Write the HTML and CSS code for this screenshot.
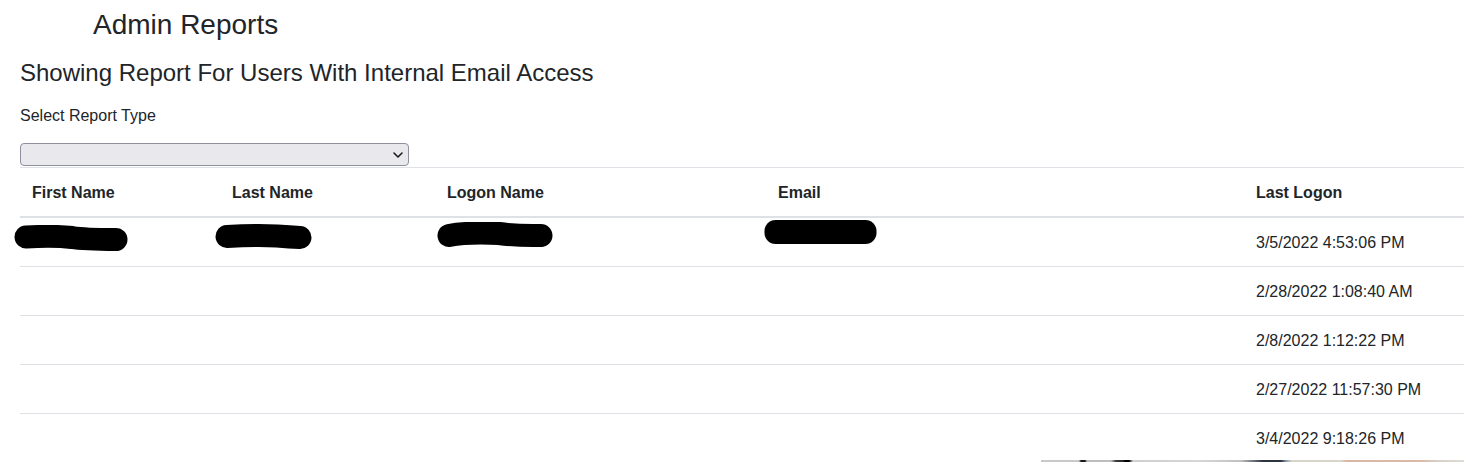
FILE: index.html
```html
<!DOCTYPE html>
<html lang="en">
<head>
<meta charset="utf-8">
<title>Admin Reports</title>
<link rel="stylesheet" href="styles.css">
</head>
<body>
<div class="page">
  <h1 class="title">Admin Reports</h1>
  <h2 class="subtitle">Showing Report For Users With Internal Email Access</h2>
  <label class="label" for="rtype">Select Report Type</label>
  <div class="select-wrap">
    <select id="rtype" class="select"><option></option></select>
    <svg class="chev" width="10" height="6" viewBox="0 0 10 6"><path d="M1 1 L5 5 L9 1" fill="none" stroke="#1b1b1b" stroke-width="1.6" stroke-linecap="round" stroke-linejoin="round"/></svg>
  </div>
  <table class="report">
    <colgroup>
      <col class="c1"><col class="c2"><col class="c3"><col class="c4"><col class="c5">
    </colgroup>
    <thead>
      <tr><th>First Name</th><th>Last Name</th><th>Logon Name</th><th>Email</th><th>Last Logon</th></tr>
    </thead>
    <tbody>
      <tr>
        <td><svg class="blob b1" width="114" height="27" viewBox="0 0 114 27"><path d="M12 12 Q 40 10.5 58 12.5 Q 70 14.5 102 14.5" fill="none" stroke="#000" stroke-width="23" stroke-linecap="round" stroke-linejoin="round"/></svg></td>
        <td><svg class="blob b2" width="97" height="26" viewBox="0 0 97 26"><path d="M12 12.5 Q 40 11 62 12 Q 75 13 85 13.5" fill="none" stroke="#000" stroke-width="23" stroke-linecap="round" stroke-linejoin="round"/></svg></td>
        <td><svg class="blob b3" width="116" height="26" viewBox="0 0 116 26"><path d="M12 13.5 Q 30 10 62 11.5 Q 80 14 104 13.5" fill="none" stroke="#000" stroke-width="23" stroke-linecap="round" stroke-linejoin="round"/></svg></td>
        <td><svg class="blob b4" width="113" height="26" viewBox="0 0 113 26"><rect x="0.5" y="1" width="112" height="24" rx="11" fill="#000"/></svg></td>
        <td>3/5/2022 4:53:06 PM</td>
      </tr>
      <tr><td></td><td></td><td></td><td></td><td>2/28/2022 1:08:40 AM</td></tr>
      <tr><td></td><td></td><td></td><td></td><td>2/8/2022 1:12:22 PM</td></tr>
      <tr><td></td><td></td><td></td><td></td><td>2/27/2022 11:57:30 PM</td></tr>
      <tr><td></td><td></td><td></td><td></td><td>3/4/2022 9:18:26 PM</td></tr>
    </tbody>
  </table>
</div>
<div class="photo-strip"></div>
</body>
</html>
```

FILE: styles.css
```css
html, body {
  margin: 0;
  padding: 0;
  background: #fff;
}
body {
  font-family: "Liberation Sans", Arial, sans-serif;
  color: #212529;
  overflow: hidden;
}
.page {
  padding-left: 20px;
}
.title {
  margin: 0;
  padding: 9px 0 0 73px;
  font-size: 28px;
  line-height: 32px;
  font-weight: normal;
}
.subtitle {
  margin: 18px 0 0;
  font-size: 24px;
  line-height: 28px;
  font-weight: normal;
}
.label {
  display: block;
  margin-top: 17px;
  font-size: 16px;
  line-height: 24px;
}
.select-wrap {
  position: relative;
  width: 389px;
  height: 23px;
  margin-top: 15px;
}
.select {
  appearance: none;
  -webkit-appearance: none;
  box-sizing: border-box;
  width: 389px;
  height: 23px;
  margin: 0;
  padding: 0 24px 0 4px;
  background: #e9e9ed;
  border: 1px solid #8f8f9d;
  border-radius: 4px;
  font: 14px "Liberation Sans", Arial, sans-serif;
  color: #000;
}
.chev {
  position: absolute;
  right: 6px;
  top: 9px;
  pointer-events: none;
}
.report {
  width: 1444px;
  table-layout: fixed;
  border-collapse: collapse;
  font-size: 16px;
  line-height: 24px;
  margin-top: 1px;
}
.c1 { width: 200px; }
.c2 { width: 215px; }
.c3 { width: 331px; }
.c4 { width: 478px; }
.c5 { width: 220px; }
.report th,
.report td {
  padding: 13px 12px 11px;
  text-align: left;
  vertical-align: top;
  border-top: 1px solid #dee2e6;
  white-space: nowrap;
}
.report th {
  font-weight: bold;
}
.report thead th {
  border-bottom: 2px solid #dee2e6;
}
.report td {
  position: relative;
}
.blob {
  position: absolute;
  display: block;
}
.b1 { left: -6px; top: 7px; }
.b2 { left: -5px; top: 6px; }
.b3 { left: 2px; top: 4px; }
.b4 { left: -2px; top: 1px; }
.photo-strip {
  position: fixed;
  left: 1041px;
  right: 0;
  bottom: 0;
  height: 2px;
  background: linear-gradient(to right,
    #c9c9c9 0px, #c9c9c9 38px, #1a1a1a 40px, #1a1a1a 44px, #bdbdbd 46px,
    #bdbdbd 70px, #3a3a3a 75px, #2a2a2a 82px, #000 84px, #000 88px,
    #cfcfcf 92px, #d6d6d6 160px, #c0c0c0 200px, #2d3440 222px, #2d3440 240px,
    #8899aa 245px, #d8d5cb 251px, #d8d5cb 300px, #d9b7a6 305px, #dcb9a8 380px,
    #d6cfc8 395px, #e0dcd6 424px);
}
```
